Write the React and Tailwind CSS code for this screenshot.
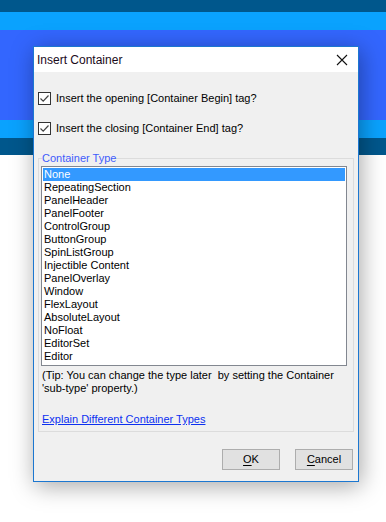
import React from 'react';

const types = [
  'None', 'RepeatingSection', 'PanelHeader', 'PanelFooter', 'ControlGroup', 'ButtonGroup',
  'SpinListGroup', 'Injectible Content', 'PanelOverlay', 'Window', 'FlexLayout',
  'AbsoluteLayout', 'NoFloat', 'EditorSet', 'Editor',
];

const CheckBox = ({ label }) => (
  <div className="flex items-center h-[13px]">
    <div className="w-[13px] h-[13px] border border-[#333] bg-white flex items-center justify-center">
      <svg width="11" height="11" viewBox="0 0 11 11">
        <path d="M1.5 5.5 L4.2 8.2 L9.5 2.5" fill="none" stroke="#444" strokeWidth="1.2" />
      </svg>
    </div>
    <span className="ml-[5px] leading-[13px]">{label}</span>
  </div>
);

const Button = ({ accel, rest }) => (
  <button className="w-[58px] h-[21px] border border-[#adadad] bg-[#e1e1e1] text-black leading-none">
    <span className="underline underline-offset-2">{accel}</span>{rest}
  </button>
);

export default function App() {
  return (
    <div className="relative w-[386px] h-[522px] overflow-hidden bg-white text-[11px] text-black [font-family:'Liberation_Sans',Arial,sans-serif]">
      {/* desktop bands behind the dialog */}
      <div className="h-[12px] bg-[#00578c]" />
      <div className="h-[18px] bg-[#0aa2fe]" />
      <div className="h-[90px] bg-[#3366fe]" />
      <div className="h-[18px] bg-[#0aa2fe]" />
      <div className="h-[17px] bg-[#00578c]" />

      {/* dialog */}
      <div className="absolute left-[33px] top-[46px] w-[326px] h-[436px] border border-[#1c77d0] bg-[#f0f0f0] shadow-[2px_4px_22px_rgba(0,0,0,0.35)] flex flex-col">
        <div className="h-[25px] bg-white flex items-center justify-between pl-[3px] pr-[10px]">
          <span className="text-[12px] text-[#1a0a1a]">Insert Container</span>
          <svg width="12" height="12" viewBox="0 0 12 12">
            <path d="M1 1 L11 11 M11 1 L1 11" stroke="#111" strokeWidth="1.1" />
          </svg>
        </div>

        <div className="flex flex-col pl-[4px] pt-[20px] gap-[17px]">
          <CheckBox label="Insert the opening [Container Begin] tag?" />
          <CheckBox label="Insert the closing [Container End] tag?" />
        </div>

        {/* group box */}
        <fieldset className="mt-[16px] ml-[4px] w-[316px] h-[281px] border border-[#dcdcdc] px-[2px] pb-0 pt-0">
          <legend className="ml-[1px] px-0 text-[#3f5cfb] leading-[14px]">Container Type</legend>
          <div className="w-[306px] h-[200px] border border-[#828790] bg-white p-[1px] mt-[1px]">
            {types.map((t, i) => (
              <div
                key={t}
                className={`h-[13px] leading-[13px] pl-[1px] ${i === 0 ? 'bg-[#3399ff] text-white' : ''}`}
              >
                {t}
              </div>
            ))}
          </div>
          <p className="mt-[3px] pl-[1px] leading-[13px] pr-1">
            (Tip: You can change the type later&nbsp; by setting the Container 'sub-type' property.)
          </p>
          <a href="#" className="block mt-[18px] ml-[1px] text-[#0c30f0] underline leading-[13px]">
            Explain Different Container Types
          </a>
        </fieldset>

        <div className="flex justify-end gap-[15px] pr-[5px] mt-[17px]">
          <Button accel="O" rest="K" />
          <Button accel="C" rest="ancel" />
        </div>
      </div>
    </div>
  );
}
